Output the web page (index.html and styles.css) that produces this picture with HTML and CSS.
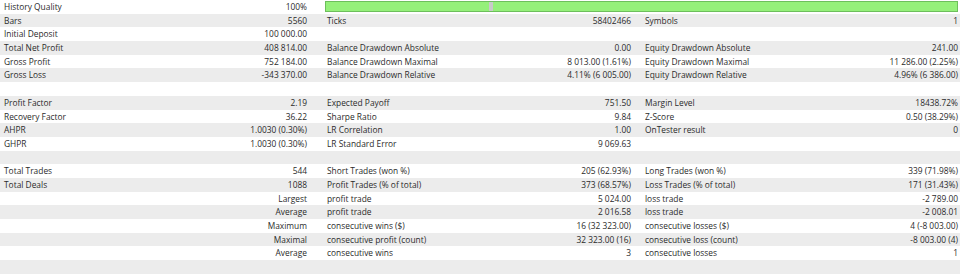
FILE: index.html
```html
<!DOCTYPE html>
<html>
<head>
<meta charset="utf-8">
<link rel="stylesheet" href="styles.css">
</head>
<body>
<div class="report">
  <div class="row">
    <div class="lbl">History Quality</div><div class="val">100%</div>
    <div class="barcell"><div class="bar"><div class="mark"></div></div></div>
  </div>
  <div class="row">
    <div class="lbl">Bars</div><div class="val">5560</div>
    <div class="lbl l2">Ticks</div><div class="val">58402466</div>
    <div class="lbl l3">Symbols</div><div class="val">1</div>
  </div>
  <div class="row">
    <div class="lbl">Initial Deposit</div><div class="val">100 000.00</div>
    <div class="lbl l2"></div><div class="val"></div>
    <div class="lbl l3"></div><div class="val"></div>
  </div>
  <div class="row">
    <div class="lbl">Total Net Profit</div><div class="val">408 814.00</div>
    <div class="lbl l2">Balance Drawdown Absolute</div><div class="val">0.00</div>
    <div class="lbl l3">Equity Drawdown Absolute</div><div class="val">241.00</div>
  </div>
  <div class="row">
    <div class="lbl">Gross Profit</div><div class="val">752 184.00</div>
    <div class="lbl l2">Balance Drawdown Maximal</div><div class="val">8 013.00 (1.61%)</div>
    <div class="lbl l3">Equity Drawdown Maximal</div><div class="val">11 286.00 (2.25%)</div>
  </div>
  <div class="row">
    <div class="lbl">Gross Loss</div><div class="val">-343 370.00</div>
    <div class="lbl l2">Balance Drawdown Relative</div><div class="val">4.11% (6 005.00)</div>
    <div class="lbl l3">Equity Drawdown Relative</div><div class="val">4.96% (6 386.00)</div>
  </div>
  <div class="row"></div>
  <div class="row">
    <div class="lbl">Profit Factor</div><div class="val">2.19</div>
    <div class="lbl l2">Expected Payoff</div><div class="val">751.50</div>
    <div class="lbl l3">Margin Level</div><div class="val">18438.72%</div>
  </div>
  <div class="row">
    <div class="lbl">Recovery Factor</div><div class="val">36.22</div>
    <div class="lbl l2">Sharpe Ratio</div><div class="val">9.84</div>
    <div class="lbl l3">Z-Score</div><div class="val">0.50 (38.29%)</div>
  </div>
  <div class="row">
    <div class="lbl">AHPR</div><div class="val">1.0030 (0.30%)</div>
    <div class="lbl l2">LR Correlation</div><div class="val">1.00</div>
    <div class="lbl l3">OnTester result</div><div class="val">0</div>
  </div>
  <div class="row">
    <div class="lbl">GHPR</div><div class="val">1.0030 (0.30%)</div>
    <div class="lbl l2">LR Standard Error</div><div class="val">9 069.63</div>
    <div class="lbl l3"></div><div class="val"></div>
  </div>
  <div class="row"></div>
  <div class="row">
    <div class="lbl">Total Trades</div><div class="val">544</div>
    <div class="lbl l2">Short Trades (won %)</div><div class="val">205 (62.93%)</div>
    <div class="lbl l3">Long Trades (won %)</div><div class="val">339 (71.98%)</div>
  </div>
  <div class="row">
    <div class="lbl">Total Deals</div><div class="val">1088</div>
    <div class="lbl l2">Profit Trades (% of total)</div><div class="val">373 (68.57%)</div>
    <div class="lbl l3">Loss Trades (% of total)</div><div class="val">171 (31.43%)</div>
  </div>
  <div class="row">
    <div class="lbl"></div><div class="val">Largest</div>
    <div class="lbl l2">profit trade</div><div class="val">5 024.00</div>
    <div class="lbl l3">loss trade</div><div class="val">-2 789.00</div>
  </div>
  <div class="row">
    <div class="lbl"></div><div class="val">Average</div>
    <div class="lbl l2">profit trade</div><div class="val">2 016.58</div>
    <div class="lbl l3">loss trade</div><div class="val">-2 008.01</div>
  </div>
  <div class="row">
    <div class="lbl"></div><div class="val">Maximum</div>
    <div class="lbl l2">consecutive wins ($)</div><div class="val">16 (32 323.00)</div>
    <div class="lbl l3">consecutive losses ($)</div><div class="val">4 (-8 003.00)</div>
  </div>
  <div class="row">
    <div class="lbl"></div><div class="val">Maximal</div>
    <div class="lbl l2">consecutive profit (count)</div><div class="val">32 323.00 (16)</div>
    <div class="lbl l3">consecutive loss (count)</div><div class="val">-8 003.00 (4)</div>
  </div>
  <div class="row">
    <div class="lbl"></div><div class="val">Average</div>
    <div class="lbl l2">consecutive wins</div><div class="val">3</div>
    <div class="lbl l3">consecutive losses</div><div class="val">1</div>
  </div>
  <div class="row"></div>
</div>
</body>
</html>
```

FILE: styles.css
```css
html, body {
  margin: 0;
  padding: 0;
  background: #ffffff;
}
.report {
  width: 960px;
  font-family: "Open Sans", "Noto Sans", "DejaVu Sans", sans-serif;
  font-size: 8.4px;
  color: #2b2b2b;
}
.row {
  display: grid;
  grid-template-columns: 150px 153px 170px 154px 164px 163px;
  padding-left: 4px;
  height: 13.7px;
  line-height: 13.7px;
  white-space: nowrap;
  background: #ffffff;
}
.row:nth-child(even) {
  background: #ececec;
}
.lbl {
  text-align: left;
}
.val {
  text-align: right;
}
.l2 {
  padding-left: 20px;
}
.l3 {
  padding-left: 14px;
}
.barcell {
  grid-column: 3 / 7;
  display: flex;
  align-items: center;
  padding-left: 18px;
}
.bar {
  position: relative;
  flex: 1;
  height: 9px;
  background: #95f07a;
  border: 1px solid #6dbf5c;
}
.mark {
  position: absolute;
  left: 163px;
  top: 0;
  width: 4px;
  height: 9px;
  background: #c9c9c9;
}
```
